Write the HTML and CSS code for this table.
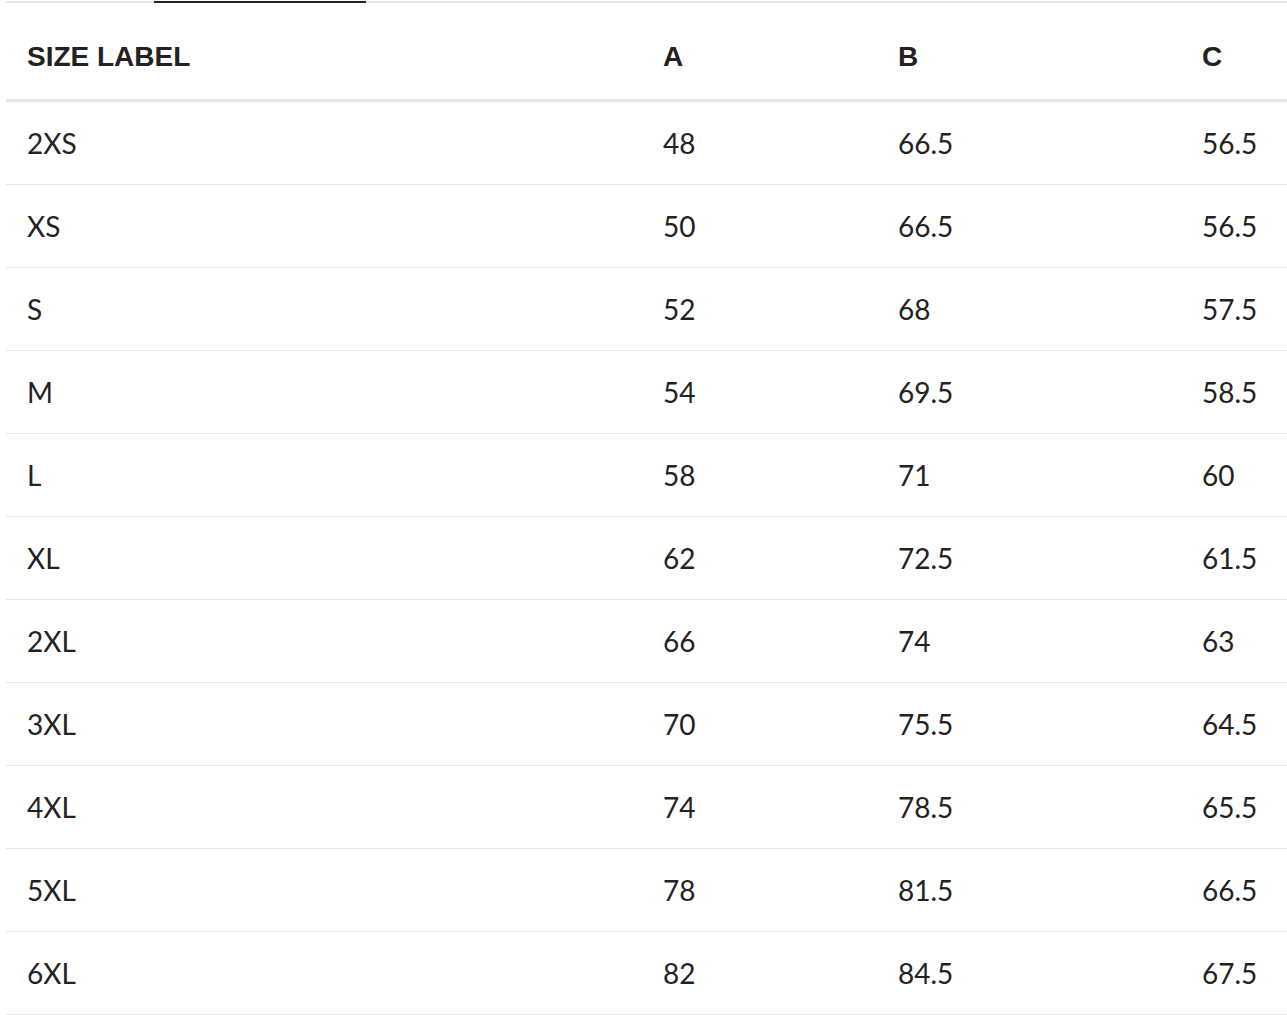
FILE: index.html
```html
<!DOCTYPE html>
<html lang="en">
<head>
<meta charset="utf-8">
<title>Size chart</title>
<link rel="stylesheet" href="styles.css">
</head>
<body>
<div class="wrap">
  <div class="tabs">
    <div class="tab"></div>
    <div class="tab active"></div>
  </div>
  <table class="sizes">
    <colgroup>
      <col class="c1"><col class="c2"><col class="c3"><col class="c4">
    </colgroup>
    <thead>
      <tr><th>SIZE LABEL</th><th>A</th><th>B</th><th>C</th></tr>
    </thead>
    <tbody>
      <tr><td>2XS</td><td>48</td><td>66.5</td><td>56.5</td></tr>
      <tr><td>XS</td><td>50</td><td>66.5</td><td>56.5</td></tr>
      <tr><td>S</td><td>52</td><td>68</td><td>57.5</td></tr>
      <tr><td>M</td><td>54</td><td>69.5</td><td>58.5</td></tr>
      <tr><td>L</td><td>58</td><td>71</td><td>60</td></tr>
      <tr><td>XL</td><td>62</td><td>72.5</td><td>61.5</td></tr>
      <tr><td>2XL</td><td>66</td><td>74</td><td>63</td></tr>
      <tr><td>3XL</td><td>70</td><td>75.5</td><td>64.5</td></tr>
      <tr><td>4XL</td><td>74</td><td>78.5</td><td>65.5</td></tr>
      <tr><td>5XL</td><td>78</td><td>81.5</td><td>66.5</td></tr>
      <tr><td>6XL</td><td>82</td><td>84.5</td><td>67.5</td></tr>
    </tbody>
  </table>
</div>
</body>
</html>
```
FILE: styles.css
```css
html, body {
  margin: 0;
  padding: 0;
  background: #fff;
}
body {
  overflow: hidden;
}
.wrap {
  padding-left: 6px;
  padding-top: 1px;
}
.tabs {
  display: flex;
  height: 0;
  border-bottom: 2px solid #e6e6e6;
}
.tab {
  width: 148px;
}
.tab.active {
  width: 212px;
  height: 0;
  border-bottom: 2px solid #222;
}
.sizes {
  border-collapse: collapse;
  table-layout: fixed;
  width: 1320px;
  color: #222;
}
.c1 { width: 636px; }
.c2 { width: 235px; }
.c3 { width: 304px; }
.c4 { width: 145px; }
.sizes th {
  font-family: "Liberation Sans", Arial, sans-serif;
  font-weight: 700;
  font-size: 28px;
  text-align: left;
  height: 84px;
  padding: 12px 0 0 21px;
  border-bottom: 3px solid #e6e6e6;
  vertical-align: middle;
}
.sizes td {
  font-family: Lato, "Noto Sans", sans-serif;
  font-size: 28px;
  text-align: left;
  height: 82px;
  padding: 0 0 0 21px;
  border-bottom: 1px solid #e6e6e6;
  vertical-align: middle;
}
```
